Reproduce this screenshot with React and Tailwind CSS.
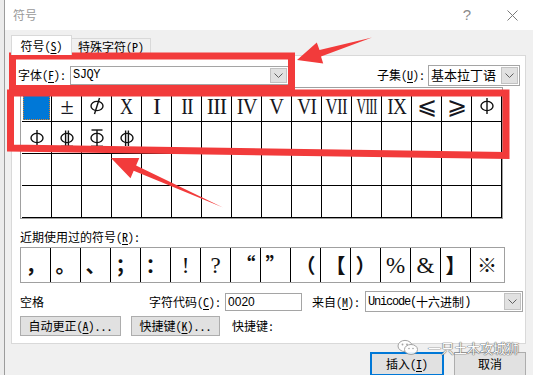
import React from "react";

const CJK = "font-['Noto_Sans_Mono_CJK_SC','Noto_Sans_CJK_SC',sans-serif]";

function U({ children }) {
  return <span className="underline underline-offset-[2px]">{children}</span>;
}

function Chevron() {
  return (
    <svg width="9" height="5" viewBox="0 0 9 5">
      <path d="M0.5 0.5 L4.5 4.5 L8.5 0.5" fill="none" stroke="#606060" strokeWidth="1" />
    </svg>
  );
}

function Combo({ width, height, children, textClass = "" }) {
  return (
    <div
      className={`flex items-stretch bg-white border border-[#a5a5a5] ${width} ${height}`}
    >
      <div className={`flex-1 flex items-center pl-[2px] overflow-hidden whitespace-nowrap ${textClass}`}>
        {children}
      </div>
      <div className="w-[17px] m-[1px] bg-[#e1e1e1] border border-[#c2c2c2] flex items-center justify-center">
        <Chevron />
      </div>
    </div>
  );
}

// SJQY rebar-like glyphs
function Sym({ kind }) {
  const s = { fill: "none", stroke: "#111", strokeWidth: 1.4 };
  return (
    <svg width="16" height="20" viewBox="0 0 16 20">
      <ellipse cx="8" cy="10" rx="6" ry="4.6" {...s} />
      {(kind === 1 || kind === 3 || kind === 5) && <line x1="8" y1="2" x2="8" y2="18" {...s} />}
      {(kind === 2 || kind === 4) && (
        <>
          <line x1="6.6" y1="2.5" x2="6.6" y2="18" {...s} />
          <line x1="9.4" y1="2.5" x2="9.4" y2="18" {...s} />
        </>
      )}
      {(kind === 1 || kind === 2 || kind === 3) && <line x1="2" y1="18.3" x2="14" y2="18.3" {...s} />}
      {kind === 3 && <line x1="2.5" y1="2" x2="13.5" y2="2" {...s} />}
      {kind === 6 && <line x1="10.5" y1="2" x2="5.5" y2="18" {...s} />}
    </svg>
  );
}

const row1 = [
  { sel: true },
  { t: "±", c: "" },
  { svg: 6 },
  { t: "X", c: "scale-x-[0.75]" },
  { t: "I", c: "" },
  { t: "II", c: "scale-x-[0.82]" },
  { t: "III", c: "scale-x-[0.92]" },
  { t: "IV", c: "scale-x-[0.85]" },
  { t: "V", c: "scale-x-[0.85]" },
  { t: "VI", c: "scale-x-[0.8]" },
  { t: "VII", c: "scale-x-[0.7]" },
  { t: "VIII", c: "scale-x-[0.55]" },
  { t: "IX", c: "scale-x-[0.8]" },
  { t: "⩽", c: "font-['DejaVu_Sans'] text-[20px]" },
  { t: "⩾", c: "font-['DejaVu_Sans'] text-[20px]" },
  { svg: 5 },
];

const row2 = [{ svg: 1 }, { svg: 2 }, { svg: 3 }, { svg: 4 }];

const recent = [
  { t: "，" }, { t: "。" }, { t: "、" }, { t: "；" }, { t: "：" },
  { t: "!", serif: true }, { t: "?", serif: true },
  { t: "“" }, { t: "”" }, { t: "（" }, { t: "【" }, { t: "）" },
  { t: "%", serif: true }, { t: "&", serif: true }, { t: "】" }, { t: "※" },
];

function GridCell({ cell }) {
  if (!cell) return <div className="h-[32px] border-r border-b border-black" />;
  if (cell.sel)
    return (
      <div className="h-[32px] border-r border-b border-black p-[1px]">
        <div className="w-full h-full bg-[#0078d7] outline-1 outline-dotted outline-[#d9822b] -outline-offset-1" />
      </div>
    );
  return (
    <div className="h-[32px] border-r border-b border-black flex items-center justify-center overflow-hidden">
      {cell.svg ? (
        <Sym kind={cell.svg} />
      ) : (
        <span
          className={`inline-block font-['Liberation_Serif'] text-[24px] leading-none tracking-[-1px] text-[#161620] ${cell.c}`}
        >
          {cell.t}
        </span>
      )}
    </div>
  );
}

function Annotations() {
  const red = "#f23b3b";
  return (
    <svg className="absolute left-0 top-0 pointer-events-none" width="533" height="375">
      <polygon points="12.5,56 291.5,56 291.5,88.5 12.5,88.5" fill="none" stroke={red} strokeWidth="7" />
      <polygon points="10.5,93 506,93 506,155.5 10.5,148" fill="none" stroke={red} strokeWidth="7" />
      <polygon
        points="297,60 316.8,42.6 319.5,50 372,37.5 321,56.5 323.2,63.6"
        fill={red}
      />
      <polygon
        points="111,158 139.3,158 136.1,165.4 223,207.5 133.7,170.8 130.5,178.2"
        fill={red}
      />
    </svg>
  );
}

function Watermark() {
  return (
    <div className="absolute left-[397px] top-[339px] flex items-center gap-[9px] pointer-events-none opacity-90">
      <svg width="22" height="17" viewBox="0 0 22 17">
        <ellipse cx="8" cy="7" rx="7" ry="5.6" fill="#fff" stroke="#9a9a9a" strokeWidth="1" />
        <ellipse cx="14" cy="10.5" rx="6.5" ry="5" fill="#fff" stroke="#9a9a9a" strokeWidth="1" />
        <circle cx="5.5" cy="5.5" r="0.9" fill="#9a9a9a" />
        <circle cx="10" cy="5.5" r="0.9" fill="#9a9a9a" />
        <circle cx="12" cy="9.5" r="0.8" fill="#9a9a9a" />
        <circle cx="16" cy="9.5" r="0.8" fill="#9a9a9a" />
      </svg>
      <span
        className="font-['Noto_Sans_CJK_SC',sans-serif] text-[13px] leading-none text-white [text-shadow:0_0_1px_#555,0_0_1px_#555,0_0_1px_#555]"
      >
        一只土木攻城狮
      </span>
    </div>
  );
}

export default function App() {
  return (
    <div className={`relative w-[533px] h-[375px] overflow-hidden bg-[#ececec] text-[12px] text-black ${CJK}`}>
      <div className="flex h-full">
        <div className="w-[4px]" />
        <div className="flex-1 flex flex-col border-l border-[#9c9c9c]">
          {/* title bar */}
          <div className="h-[30px] bg-white flex items-center pl-[8px] pr-[15px] shrink-0">
            <span className="text-[#9a9a9a] text-[12px]">符号</span>
            <div className="flex-1" />
            <span className="font-['Liberation_Sans'] text-[15px] text-[#8a8a8a] mr-[36px]">?</span>
            <svg width="11" height="11" viewBox="0 0 11 11">
              <path d="M0.5 0.5 L10.5 10.5 M10.5 0.5 L0.5 10.5" stroke="#7a7a7a" strokeWidth="1" />
            </svg>
          </div>

          {/* body */}
          <div className="flex-1 bg-[#f0f0f0] pl-[6px] pt-[6px]">
            {/* tabs */}
            <div className="flex items-end h-[19px]">
              <div className="w-[61px] h-[20px] bg-white border border-b-0 border-[#d9d9d9] relative z-10 flex items-center justify-center pt-[1px]">
                符号(<U>S</U>)
              </div>
              <div className="w-[79px] h-[17px] bg-[#f0f0f0] border border-b-0 border-l-0 border-[#d9d9d9] flex items-center justify-center">
                特殊字符(<U>P</U>)
              </div>
            </div>

            {/* tab panel */}
            <div className="w-[515px] h-[289px] bg-white border border-[#d9d9d9] flex flex-col">
              {/* font row */}
              <div className="flex items-center mt-[9px] h-[20px] pl-[6px] pr-[5px]">
                <span>字体(<U>F</U>):</span>
                <div className="ml-[4px]">
                  <Combo width="w-[219px]" height="h-[19px]" textClass="font-['Liberation_Mono'] text-[12px] tracking-[-0.5px]">
                    SJQY
                  </Combo>
                </div>
                <div className="flex-1" />
                <span>子集(<U>U</U>):</span>
                <div className="ml-[3px]">
                  <Combo width="w-[92px]" height="h-[21px]" textClass="text-[13px]">
                    基本拉丁语
                  </Combo>
                </div>
              </div>

              {/* symbol grid */}
              <div className="ml-[8px] mt-[2px] w-[483px] border border-[#a0a0a0] pt-[2px] pl-[1px]">
                <div className="grid grid-cols-[repeat(16,30px)]">
                  {Array.from({ length: 64 }).map((_, i) => {
                    const r = Math.floor(i / 16);
                    const c = i % 16;
                    const cell = r === 0 ? row1[c] : r === 1 ? row2[c] : null;
                    return <GridCell key={i} cell={cell} />;
                  })}
                </div>
              </div>

              {/* recently used */}
              <div className="ml-[8px] mt-[10px] leading-[16px]">近期使用过的符号(<U>R</U>):</div>
              <div className="ml-[8px] mt-[2px] w-[485px] h-[36px] border border-[#a0a0a0] flex">
                {recent.map((r, i) => (
                  <div
                    key={i}
                    className={`h-full flex items-center justify-center ${
                      i === 15 ? "w-[32px]" : "w-[30px] border-r border-black"
                    }`}
                  >
                    {r.serif ? (
                      <span className="font-['Liberation_Serif'] text-[23px] leading-none text-[#111]">{r.t}</span>
                    ) : (
                      <span className="font-['Noto_Sans_CJK_SC',sans-serif] font-bold text-[20px] leading-none text-[#111]">
                        {r.t}
                      </span>
                    )}
                  </div>
                ))}
              </div>

              {/* char code row */}
              <div className="flex items-center mt-[8px] h-[21px] pl-[8px]">
                <span className="w-[129px]">空格</span>
                <span>字符代码(<U>C</U>):</span>
                <div className="ml-[4px] w-[77px] h-[18px] border border-[#a5a5a5] flex items-center pl-[2px] font-['Liberation_Sans'] text-[12px]">
                  0020
                </div>
                <span className="ml-[10px]">来自(<U>M</U>):</span>
                <div className="ml-[5px]">
                  <Combo width="w-[158px]" height="h-[21px]" textClass="font-['Liberation_Mono'] text-[12px] tracking-[-1.2px]">
                    Unicode(<span className={`${CJK} tracking-normal`}>十六进制</span>)
                  </Combo>
                </div>
              </div>

              {/* shortcut row */}
              <div className="flex items-center mt-[4px] h-[20px] pl-[8px]">
                <div className="w-[101px] h-[20px] bg-[#e1e1e1] border border-[#adadad] flex items-center justify-center">
                  自动更正(<U>A</U>)...
                </div>
                <div className="ml-[10px] w-[89px] h-[20px] bg-[#e1e1e1] border border-[#adadad] flex items-center justify-center">
                  快捷键(<U>K</U>)...
                </div>
                <span className="ml-[12px]">快捷键:</span>
              </div>
            </div>

            {/* dialog buttons */}
            <div className="flex justify-end gap-[10px] mt-[8px] pr-[7px]">
              <div className="w-[74px] h-[24px] bg-[#e1e1e1] border-2 border-[#0078d7] flex items-center justify-center">
                插入(<U>I</U>)
              </div>
              <div className="w-[72px] h-[24px] bg-[#e1e1e1] border border-[#adadad] flex items-center justify-center">
                取消
              </div>
            </div>
          </div>
        </div>
      </div>

      <Annotations />
      <Watermark />
    </div>
  );
}
